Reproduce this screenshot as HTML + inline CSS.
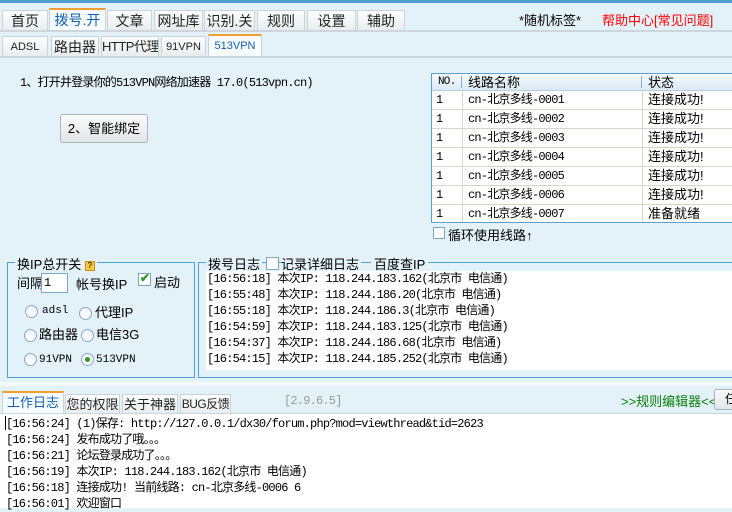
<!DOCTYPE html>
<html><head><meta charset="utf-8"><style>
*{box-sizing:border-box;margin:0;padding:0}
body{width:732px;height:508px;overflow:hidden;background:#e3f1f9;font-family:"Liberation Mono","Noto Sans CJK SC",monospace;font-size:12px;letter-spacing:-0.8px;color:#000;position:relative}
.a{position:absolute}
.cj{font-family:"Liberation Sans","Noto Sans CJK SC",sans-serif;letter-spacing:0}
.tab{position:absolute;background:linear-gradient(#fdfdfd,#e9ecee);border:1px solid #c9d3da;border-bottom:none;text-align:center;font-family:"Liberation Sans","Noto Sans CJK SC",sans-serif;letter-spacing:0;font-size:14px;line-height:20px;color:#222;white-space:nowrap;overflow:hidden}
.tab.on{background:#f6fbfe;border-top:2px solid #f0a030;color:#1560b0}
.hl{position:absolute;left:0;width:732px;height:2px;background:#cdd6dd}
.row{position:absolute;left:432px;width:300px;height:19px;background:#fff;border-bottom:1px solid #d8d4cc}
.row span{position:absolute;top:0;line-height:18px}
.rad{position:absolute;width:13px;height:13px;border-radius:50%;border:1px solid #8aa8c8;background:linear-gradient(#eef2f6,#fff)}
.lbl{position:absolute;line-height:14px;letter-spacing:0}
</style></head><body>
<div class="a" style="left:0;top:0;width:732px;height:3px;background:#4d9dcc"></div>
<div class="tab" style="left:2px;top:10px;width:46px;height:21px">首页</div>
<div class="tab on" style="left:49px;top:8px;width:57px;height:23px">拨号.开</div>
<div class="tab" style="left:107px;top:10px;width:45px;height:21px">文章</div>
<div class="tab" style="left:154px;top:10px;width:49px;height:21px">网址库</div>
<div class="tab" style="left:204px;top:10px;width:51px;height:21px">识别.关</div>
<div class="tab" style="left:257px;top:10px;width:48px;height:21px">规则</div>
<div class="tab" style="left:307px;top:10px;width:49px;height:21px">设置</div>
<div class="tab" style="left:357px;top:10px;width:48px;height:21px">辅助</div>
<div class="a cj" style="left:519px;top:10px;font-size:13px">*随机标签*</div>
<div class="a cj" style="left:602px;top:10px;font-size:13px;color:#f00">帮助中心[常见问题]</div>
<div class="hl" style="top:30px"></div>
<div class="tab" style="left:2px;top:36px;width:46px;height:21px;font-size:11px">ADSL</div>
<div class="tab" style="left:51px;top:36px;width:48px;height:21px">路由器</div>
<div class="tab" style="left:101px;top:36px;width:58px;height:21px;font-size:13px;letter-spacing:-0.5px">HTTP代理</div>
<div class="tab" style="left:161px;top:36px;width:45px;height:21px;font-size:11px">91VPN</div>
<div class="tab on" style="left:208px;top:34px;width:54px;height:23px;font-size:11px">513VPN</div>
<div class="hl" style="top:56px"></div>
<div class="a" style="left:20px;top:73px">1、打开并登录你的513VPN网络加速器 17.0(513vpn.cn)</div>
<div class="a cj" style="left:60px;top:114px;width:88px;height:29px;border:1px solid #aab4bc;border-radius:3px;background:linear-gradient(#fafafa,#e2e6e9);text-align:center;line-height:27px;font-size:13px">2、智能绑定</div>
<div class="a" style="left:431px;top:73px;width:302px;height:150px;border:1px solid #5aa0d0;background:#fff"></div>
<div class="a" style="left:432px;top:74px;width:300px;height:17px;background:linear-gradient(#f4f9fd,#dceaf5);border-bottom:1px solid #b8cfe0"></div>
<div class="a" style="left:438px;top:74px;line-height:17px;font-size:11px">NO.</div>
<div class="a" style="left:461px;top:76px;width:1px;height:12px;background:#7ab0d8"></div>
<div class="a cj" style="left:468px;top:74px;line-height:17px;font-size:13px">线路名称</div>
<div class="a" style="left:641px;top:76px;width:1px;height:12px;background:#7ab0d8"></div>
<div class="a cj" style="left:648px;top:74px;line-height:17px;font-size:13px">状态</div>
<div class="row" style="top:91px"><span style="left:4px">1</span><span style="left:36px">cn-北京多线-0001</span><span class="cj" style="left:216px;font-size:13px">连接成功!</span></div>
<div class="row" style="top:110px"><span style="left:4px">1</span><span style="left:36px">cn-北京多线-0002</span><span class="cj" style="left:216px;font-size:13px">连接成功!</span></div>
<div class="row" style="top:129px"><span style="left:4px">1</span><span style="left:36px">cn-北京多线-0003</span><span class="cj" style="left:216px;font-size:13px">连接成功!</span></div>
<div class="row" style="top:148px"><span style="left:4px">1</span><span style="left:36px">cn-北京多线-0004</span><span class="cj" style="left:216px;font-size:13px">连接成功!</span></div>
<div class="row" style="top:167px"><span style="left:4px">1</span><span style="left:36px">cn-北京多线-0005</span><span class="cj" style="left:216px;font-size:13px">连接成功!</span></div>
<div class="row" style="top:186px"><span style="left:4px">1</span><span style="left:36px">cn-北京多线-0006</span><span class="cj" style="left:216px;font-size:13px">连接成功!</span></div>
<div class="row" style="top:205px;height:17px;border:none"><span style="left:4px">1</span><span style="left:36px">cn-北京多线-0007</span><span class="cj" style="left:216px;font-size:13px">准备就绪</span></div>
<div class="a" style="left:462px;top:91px;width:1px;height:131px;background:#d8d4cc"></div>
<div class="a" style="left:642px;top:91px;width:1px;height:131px;background:#d8d4cc"></div>
<div class="a" style="left:433px;top:227px;width:12px;height:12px;border:1px solid #7ea6c8;background:#fff"></div>
<div class="a cj" style="left:448px;top:225px;font-size:13px">循环使用线路↑</div>

<div class="a" style="left:7px;top:262px;width:188px;height:116px;border:1px solid #4aa2d6"></div>
<div class="a cj" style="left:15px;top:254px;background:#e3f1f9;padding:0 2px;font-size:13px">换IP总开关 <span style="display:inline-block;width:10px;height:10px;background:#f7c840;border:1px solid #d09020;font-size:8px;line-height:8px;text-align:center;vertical-align:1px">?</span></div>
<div class="a cj" style="left:17px;top:273px;font-size:13px">间隔</div>
<div class="a" style="left:41px;top:273px;width:27px;height:20px;border:1px solid #7ea6c8;background:#fff;padding-left:2px;line-height:18px">1</div>
<div class="a cj" style="left:76px;top:274px;font-size:13px">帐号换IP</div>
<div class="a" style="left:138px;top:273px;width:13px;height:13px;border:1px solid #7ea6c8;background:#fff;color:#2a9a2a;font-size:12px;line-height:11px;text-align:center;font-weight:bold">✔</div>
<div class="a cj" style="left:154px;top:272px;font-size:13px">启动</div>
<div class="rad" style="left:25px;top:305px"></div><div class="lbl" style="left:42px;top:304px;font-size:11px">adsl</div>
<div class="rad" style="left:79px;top:307px"></div><div class="lbl cj" style="left:95px;top:306px;font-size:13px">代理IP</div>
<div class="rad" style="left:24px;top:329px"></div><div class="lbl cj" style="left:39px;top:328px;font-size:13px">路由器</div>
<div class="rad" style="left:81px;top:329px"></div><div class="lbl cj" style="left:96px;top:328px;font-size:13px">电信3G</div>
<div class="rad" style="left:24px;top:353px"></div><div class="lbl" style="left:39px;top:353px;font-size:11px">91VPN</div>
<div class="rad" style="left:81px;top:353px"><div style="position:absolute;left:3px;top:3px;width:5px;height:5px;border-radius:50%;background:#2c9a2c"></div></div><div class="lbl" style="left:96px;top:353px;font-size:11px">513VPN</div>

<div class="a" style="left:198px;top:262px;width:540px;height:116px;border:1px solid #4aa2d6"></div>
<div class="a cj" style="left:206px;top:254px;background:#e3f1f9;padding:0 2px;font-size:13px">拨号日志</div>
<div class="a" style="left:266px;top:257px;width:13px;height:13px;border:1px solid #7ea6c8;background:#fff"></div>
<div class="a cj" style="left:281px;top:254px;background:#e3f1f9;font-size:13px;padding-right:2px">记录详细日志</div>
<div class="a cj" style="left:371px;top:254px;background:#e3f1f9;font-size:13px;padding:0 3px">百度查IP</div>
<div class="a" style="left:206px;top:271px;width:526px;height:99px;background:#fff;line-height:16px">
<div style="padding-left:1px">[16:56:18] 本次IP: 118.244.183.162(北京市 电信通)<br>[16:55:48] 本次IP: 118.244.186.20(北京市 电信通)<br>[16:55:18] 本次IP: 118.244.186.3(北京市 电信通)<br>[16:54:59] 本次IP: 118.244.183.125(北京市 电信通)<br>[16:54:37] 本次IP: 118.244.186.68(北京市 电信通)<br>[16:54:15] 本次IP: 118.244.185.252(北京市 电信通)</div></div>

<div class="a" style="left:0;top:382px;width:732px;height:4px;background:#f4f9fc"></div>
<div class="tab on" style="left:2px;top:391px;width:62px;height:23px;font-size:13px">工作日志</div>
<div class="tab" style="left:65px;top:394px;width:55px;height:20px;font-size:13px;line-height:19px">您的权限</div>
<div class="tab" style="left:122px;top:394px;width:56px;height:20px;font-size:13px;line-height:19px">关于神器</div>
<div class="tab" style="left:180px;top:394px;width:51px;height:20px;font-size:12px;line-height:19px;letter-spacing:-0.5px">BUG反馈</div>
<div class="a" style="left:284px;top:394px;color:#999;font-size:12px">[2.9.6.5]</div>
<div class="a cj" style="left:621px;top:391px;color:#0a7f0a;font-size:13px">&gt;&gt;规则编辑器&lt;&lt;</div>
<div class="a cj" style="left:714px;top:389px;width:30px;height:21px;border:1px solid #aab4bc;border-radius:3px;background:linear-gradient(#fafafa,#e2e6e9);padding-left:10px;line-height:19px">任</div>
<div class="a" style="left:0;top:413px;width:732px;height:95px;background:#fff;border-top:1px solid #cdd6dd;line-height:16px;padding:2px 0 0 6px">
[16:56:24] (1)保存: http://127.0.0.1/dx30/forum.php?mod=viewthread&amp;tid=2623<br>[16:56:24] 发布成功了哦。。。<br>[16:56:21] 论坛登录成功了。。。<br>[16:56:19] 本次IP: 118.244.183.162(北京市 电信通)<br>[16:56:18] 连接成功! 当前线路: cn-北京多线-0006 6<br>[16:56:01] 欢迎窗口</div>
<div class="a" style="left:5px;top:416px;width:1px;height:14px;background:#000"></div>
</body></html>
